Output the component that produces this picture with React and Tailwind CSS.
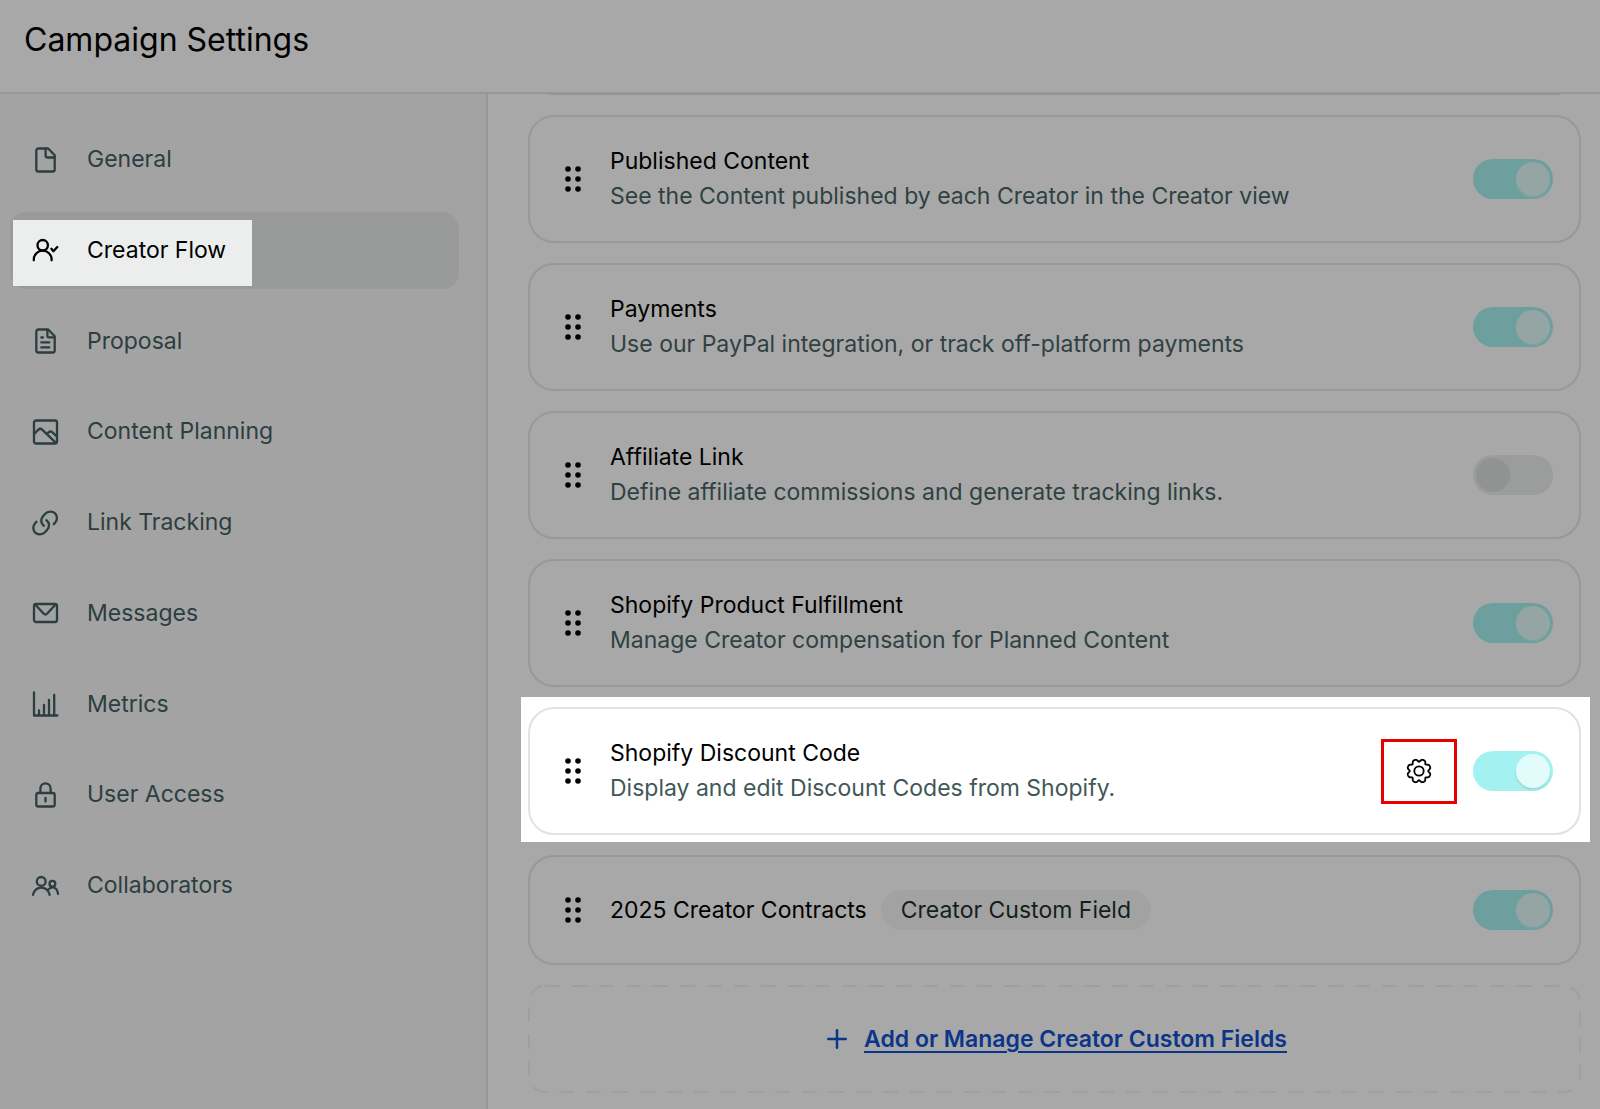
import { useState } from "react";
import { Plus } from "lucide-react";
import clsx from "clsx";

function Icon({ children }) {
  return (
    <svg
      viewBox="0 0 28 28"
      className="size-7 shrink-0"
      fill="none"
      stroke="currentColor"
      strokeWidth="2.3"
      strokeLinecap="round"
      strokeLinejoin="round"
      aria-hidden="true"
    >
      {children}
    </svg>
  );
}

const icons = {
  file: (
    <Icon>
      <path d="M17.2 2.5H7.3a2 2 0 0 0-2 2v19a2 2 0 0 0 2 2h14.4a2 2 0 0 0 2-2V9.2z" />
      <path d="M14.6 2.8v6.7a2 2 0 0 0 2 2h6.8" />
    </Icon>
  ),
  userCheck: (
    <Icon>
      <circle cx="11.7" cy="9.2" r="5.2" />
      <path d="M2.8 24.3v-.7a8.9 8.9 0 0 1 17.8 0v.7" />
      <path d="m20.4 12.8 2 2.4 3.9-4.2" />
    </Icon>
  ),
  document: (
    <Icon>
      <path d="M17.2 2.5H7.3a2 2 0 0 0-2 2v19a2 2 0 0 0 2 2h14.4a2 2 0 0 0 2-2V9.2z" />
      <path d="M16.4 2.8v6a1.5 1.5 0 0 0 1.5 1.5h5.6M10.3 10.5h1.6M10.3 15.4h8M10.3 20.4h8" />
    </Icon>
  ),
  image: (
    <Icon>
      <rect x="3" y="2.5" width="23" height="23" rx="2" />
      <path d="m3.2 16 4-4.1a3 3 0 0 1 4.2-.1L24.4 24.4" />
      <path d="m16 15.8 1.8-1.6a2.6 2.6 0 0 1 3.4 0l4.6 4.2" />
    </Icon>
  ),
  link: (
    <Icon>
      <path d="M12.8 16.8c-3.3-2.3-3.3-6.8-.8-9.6l2-2.2c3-3 7.5-3 10-.7 2.5 2.6 2.6 6.6.2 9.3l-1.5 1.6" />
      <path d="M15.4 11.2c3.3 2.3 3.3 6.8.8 9.6l-2 2.2c-3 3-7.5 3-10 .7-2.5-2.6-2.6-6.6-.2-9.3l1.5-1.6" />
    </Icon>
  ),
  mail: (
    <Icon>
      <rect x="3" y="5" width="23" height="18" rx="2" />
      <path d="m4.4 5.8 8.4 9a2.2 2.2 0 0 0 3.2 0l8.4-9" />
    </Icon>
  ),
  chart: (
    <Icon>
      <path d="M3 2.5v23h23.4M8 20.5v4.5M13 15v10M18 10v15M23.2 5v20" />
    </Icon>
  ),
  lock: (
    <Icon>
      <rect x="5.3" y="12" width="18.4" height="13.5" rx="2" />
      <path d="M9.4 11.8V7.4a5.1 5.1 0 0 1 10.2 0v4.4M14.5 16.8v3.8" />
    </Icon>
  ),
  users: (
    <Icon>
      <circle cx="10.2" cy="9.4" r="4.4" />
      <path d="M2 22.8a8.4 8.4 0 0 1 16.6 0" />
      <circle cx="21.4" cy="11.8" r="2.9" />
      <path d="M17.6 17.2c3.6-3.6 8.6-1.8 9.4 4.6" />
    </Icon>
  ),
};

// Eight rounded teeth with narrow notches between them
const gearPath =
  "M" +
  Array.from({ length: 144 }, (_, i) => {
    const angle = (i / 144) * Math.PI * 2;
    const radius = 11.8 - 2.6 * ((1 + Math.cos(8 * angle)) / 2) ** 2;
    return `${(14 + radius * Math.cos(angle)).toFixed(2)} ${(14 + radius * Math.sin(angle)).toFixed(2)}`;
  }).join("L") +
  "Z";

const navItems = [
  { label: "General", icon: "file" },
  { label: "Creator Flow", icon: "userCheck", active: true },
  { label: "Proposal", icon: "document" },
  { label: "Content Planning", icon: "image" },
  { label: "Link Tracking", icon: "link" },
  { label: "Messages", icon: "mail" },
  { label: "Metrics", icon: "chart" },
  { label: "User Access", icon: "lock" },
  { label: "Collaborators", icon: "users" },
];

const initialSteps = [
  {
    id: "published-content",
    title: "Published Content",
    description: "See the Content published by each Creator in the Creator view",
    enabled: true,
  },
  {
    id: "payments",
    title: "Payments",
    description: "Use our PayPal integration, or track off-platform payments",
    enabled: true,
  },
  {
    id: "affiliate-link",
    title: "Affiliate Link",
    description: "Define affiliate commissions and generate tracking links.",
    enabled: false,
  },
  {
    id: "product-fulfillment",
    title: "Shopify Product Fulfillment",
    description: "Manage Creator compensation for Planned Content",
    enabled: true,
  },
  {
    id: "discount-code",
    title: "Shopify Discount Code",
    description: "Display and edit Discount Codes from Shopify.",
    enabled: true,
    highlighted: true,
  },
  {
    id: "creator-contracts",
    title: "2025 Creator Contracts",
    tag: "Creator Custom Field",
    enabled: true,
  },
];

function NavItem({ label, icon, active }) {
  if (active) {
    return (
      <a href="#" aria-current="page" className="flex h-[77px] items-end rounded-2xl bg-[#999b9a] pb-[3px] pl-[3px] text-black">
        <span className="flex h-[66px] items-center gap-7 bg-[#eceeed] pr-[26px] pb-[5px] pl-[18px]">
          {icons[icon]}
          {label}
        </span>
      </a>
    );
  }

  return (
    <a href="#" className="flex h-[77px] items-center gap-7 rounded-2xl pl-[21px] text-[#2c3e3e]">
      {icons[icon]}
      {label}
    </a>
  );
}

function DragHandle() {
  return (
    <button type="button" aria-label="Reorder" className="shrink-0 cursor-grab">
      <svg viewBox="0 0 16 26" className="h-[26px] w-4" fill="currentColor" aria-hidden="true">
        {[3, 13, 23].map((y) => (
          <g key={y}>
            <circle cx="3" cy={y} r="2.8" />
            <circle cx="13" cy={y} r="2.8" />
          </g>
        ))}
      </svg>
    </button>
  );
}

function Toggle({ id, checked, onChange, highlighted }) {
  return (
    <input
      id={id}
      type="checkbox"
      role="switch"
      checked={checked}
      onChange={onChange}
      className={clsx(
        "flex h-10 w-20 shrink-0 appearance-none items-center rounded-full px-[3px] before:size-[34px] before:rounded-full",
        checked && "before:ml-auto before:shadow-[0_2px_2px_rgba(150,170,170,0.35)]",
        checked && highlighted && "bg-[#a3f2f1] before:bg-[#e1fcfb]",
        checked && !highlighted && "bg-[#6c9f9e] before:bg-[#94a5a4]",
        !checked && "bg-[#9b9d9c] before:bg-[#919392]"
      )}
    />
  );
}

function StepCard({ step, onToggle }) {
  const card = (
    <div
      className={clsx(
        "flex items-center rounded-[26px] border-2 pr-[26px] pl-[35px]",
        step.description ? "h-32" : "h-[110px]",
        step.highlighted ? "border-[#e0e3e2]" : "border-[#979898]"
      )}
    >
      <DragHandle />
      <div className="ml-[29px] flex-1">
        <div className="flex items-center gap-[14px]">
          <label htmlFor={step.id} className="text-black">
            {step.title}
          </label>
          {step.tag && (
            <span className="flex h-10 items-center rounded-full bg-[#a2a2a2] px-5 text-[#141e1e]">{step.tag}</span>
          )}
        </div>
        {step.description && (
          <p className={step.highlighted ? "text-[#425858]" : "text-[#2f4141]"}>{step.description}</p>
        )}
      </div>
      {step.highlighted && (
        <button
          type="button"
          aria-label={`${step.title} settings`}
          className="mr-4 flex h-[65px] w-[76px] items-center justify-center border-3 border-[#e80000]"
        >
          <svg viewBox="0 0 28 28" className="size-7" fill="none" stroke="currentColor" strokeWidth="1.8" aria-hidden="true">
            <path d={gearPath} strokeLinejoin="round" />
            <circle cx="14" cy="14" r="4.7" />
          </svg>
        </button>
      )}
      <Toggle id={step.id} checked={step.enabled} onChange={onToggle} highlighted={step.highlighted} />
    </div>
  );

  if (step.highlighted) {
    return <li className="-mt-[10px] -mr-[9px] -mb-[7px] -ml-[7px] bg-white pt-[10px] pr-[9px] pb-[7px] pl-[7px]">{card}</li>;
  }

  return <li>{card}</li>;
}

export default function App() {
  const [steps, setSteps] = useState(initialSteps);

  const toggleStep = (id) => {
    setSteps(steps.map((step) => (step.id === id ? { ...step, enabled: !step.enabled } : step)));
  };

  return (
    <div className="flex min-h-screen flex-col bg-[#a8a8a8] font-['Inter',sans-serif] text-[23px] leading-[35px] text-black">
      <header className="flex h-[94px] items-center border-b-2 border-[#979797] px-6 pb-3">
        <h1 className="text-[32px] leading-10">Campaign Settings</h1>
      </header>

      <div className="flex flex-1">
        <aside className="w-[488px] shrink-0 border-r-2 border-[#979797] bg-[#a3a3a3] pt-[27px] pr-[27px] pl-[10px]">
          <nav className="flex h-[803px] flex-col justify-between">
            {navItems.map((item) => (
              <NavItem key={item.label} {...item} />
            ))}
          </nav>
        </aside>

        <main className="min-w-0 flex-1 pr-[19px] pb-4 pl-10">
          {/* bottom edge of the card scrolled out above */}
          <div className="mb-5 flex h-px items-end overflow-hidden">
            <div className="h-32 flex-1 shrink-0 rounded-[26px] border-2 border-[#919191]" />
          </div>

          <ul className="flex flex-col gap-5">
            {steps.map((step) => (
              <StepCard key={step.id} step={step} onToggle={() => toggleStep(step.id)} />
            ))}
          </ul>

          <div className="relative mt-5 flex h-[108px] items-center justify-center">
            <svg className="pointer-events-none absolute inset-0 size-full overflow-visible p-px" aria-hidden="true">
              <rect
                width="100%"
                height="100%"
                rx="16"
                fill="none"
                stroke="#9e9f9f"
                strokeWidth="2"
                strokeDasharray="15 12"
              />
            </svg>
            <a href="#" className="flex items-center gap-3 font-semibold text-[#0b3589]">
              <Plus size={30} strokeWidth={2} aria-hidden="true" />
              <span className="underline decoration-2 underline-offset-4">Add or Manage Creator Custom Fields</span>
            </a>
          </div>
        </main>
      </div>
    </div>
  );
}
